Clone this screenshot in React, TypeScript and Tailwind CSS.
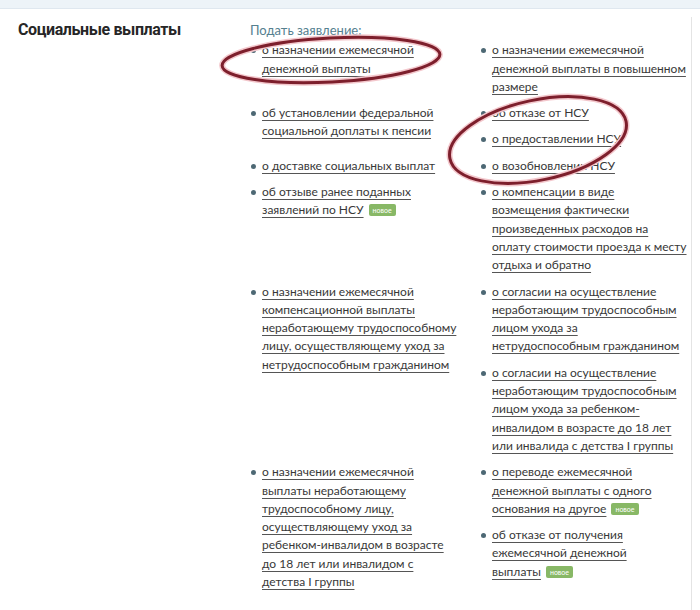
type Item = { lines: string[]; isNew?: boolean };
type Row = { left: Item[]; right: Item[] };

// строки разбиты так же, как на странице-образце
const rows: Row[] = [
  {
    left: [{ lines: ["о назначении ежемесячной", "денежной выплаты"] }],
    right: [{ lines: ["о назначении ежемесячной", "денежной выплаты в повышенном", "размере"] }],
  },
  {
    left: [{ lines: ["об установлении федеральной", "социальной доплаты к пенсии"] }],
    right: [{ lines: ["об отказе от НСУ"] }, { lines: ["о предоставлении НСУ"] }],
  },
  {
    left: [{ lines: ["о доставке социальных выплат"] }],
    right: [{ lines: ["о возобновлении НСУ"] }],
  },
  {
    left: [{ lines: ["об отзыве ранее поданных", "заявлений по НСУ"], isNew: true }],
    right: [
      {
        lines: [
          "о компенсации в виде",
          "возмещения фактически",
          "произведенных расходов на",
          "оплату стоимости проезда к месту",
          "отдыха и обратно",
        ],
      },
    ],
  },
  {
    left: [
      {
        lines: [
          "о назначении ежемесячной",
          "компенсационной выплаты",
          "неработающему трудоспособному",
          "лицу, осуществляющему уход за",
          "нетрудоспособным гражданином",
        ],
      },
    ],
    right: [
      {
        lines: ["о согласии на осуществление", "неработающим трудоспособным", "лицом ухода за", "нетрудоспособным гражданином"],
      },
      {
        lines: [
          "о согласии на осуществление",
          "неработающим трудоспособным",
          "лицом ухода за ребенком-",
          "инвалидом в возрасте до 18 лет",
          "или инвалида с детства I группы",
        ],
      },
    ],
  },
  {
    left: [
      {
        lines: [
          "о назначении ежемесячной",
          "выплаты неработающему",
          "трудоспособному лицу,",
          "осуществляющему уход за",
          "ребенком-инвалидом в возрасте",
          "до 18 лет или инвалидом с",
          "детства I группы",
        ],
      },
    ],
    right: [
      { lines: ["о переводе ежемесячной", "денежной выплаты с одного", "основания на другое"], isNew: true },
      { lines: ["об отказе от получения", "ежемесячной денежной", "выплаты"], isNew: true },
    ],
  },
];

function ListItem({ item }: { item: Item }) {
  return (
    <li className="flex gap-[6px]">
      <span className="mt-[7px] h-[5px] w-[5px] shrink-0 rounded-full bg-[#4d6874]" />
      <a href="#" className="whitespace-nowrap text-[#383838] underline decoration-[#555] underline-offset-[3px]">
        {item.lines.map((line, i) => (
          <span key={i}>
            {i > 0 && <br />}
            {line}
          </span>
        ))}
        {item.isNew && (
          <span className="ml-[5px] inline-block rounded-[2px] bg-[#88b866] px-[4px] align-[1px] text-[7px] leading-[12px] text-white no-underline">
            новое
          </span>
        )}
      </a>
    </li>
  );
}

export default function App() {
  return (
    <div className="relative h-[610px] w-[700px] overflow-hidden bg-white" style={{ fontFamily: 'Lato, "Open Sans", sans-serif' }}>
      <div className="h-[9px] border-b border-[#dfe7ef] bg-[#edf3f8]" />

      <div className="mt-[8px] flex w-[692px] border-r border-[#e4e4e4]">
        <div className="w-[250px] shrink-0 pl-[18px] pt-[2px]">
          <h2 className="text-[16px] font-bold leading-[22px] tracking-[-0.4px] text-[#262626]" style={{ fontFamily: "Roboto, sans-serif" }}>
            Социальные выплаты
          </h2>
        </div>

        <div className="flex-1 pb-[20px] pt-[4px] text-[12px] leading-[18.3px]">
          <p className="mb-[2px] text-[13px] text-[#55808f]">Подать заявление:</p>
          <div className="flex flex-col gap-[8px] pl-[1px]">
            {rows.map((row, i) => (
              <div key={i} className="grid grid-cols-[230px_206px]">
                <ul className="flex flex-col gap-[8px]">
                  {row.left.map((it) => (
                    <ListItem key={it.lines.join(" ")} item={it} />
                  ))}
                </ul>
                <ul className="flex flex-col gap-[8px]">
                  {row.right.map((it) => (
                    <ListItem key={it.lines.join(" ")} item={it} />
                  ))}
                </ul>
              </div>
            ))}
          </div>
        </div>
      </div>

      <svg className="pointer-events-none absolute left-0 top-0" width="700" height="610" viewBox="0 0 700 610" fill="none">
        <ellipse cx="331" cy="60" rx="109" ry="22" transform="rotate(-3 331 60)" stroke="#f3c7cc" strokeWidth="6" />
        <ellipse cx="331" cy="60" rx="109" ry="22" transform="rotate(-3 331 60)" stroke="#7d1f2c" strokeWidth="3" />
        <ellipse cx="538" cy="140" rx="90" ry="40" transform="rotate(-12 538 140)" stroke="#f3c7cc" strokeWidth="6" />
        <ellipse cx="538" cy="140" rx="90" ry="40" transform="rotate(-12 538 140)" stroke="#7d1f2c" strokeWidth="3" />
      </svg>
    </div>
  );
}
